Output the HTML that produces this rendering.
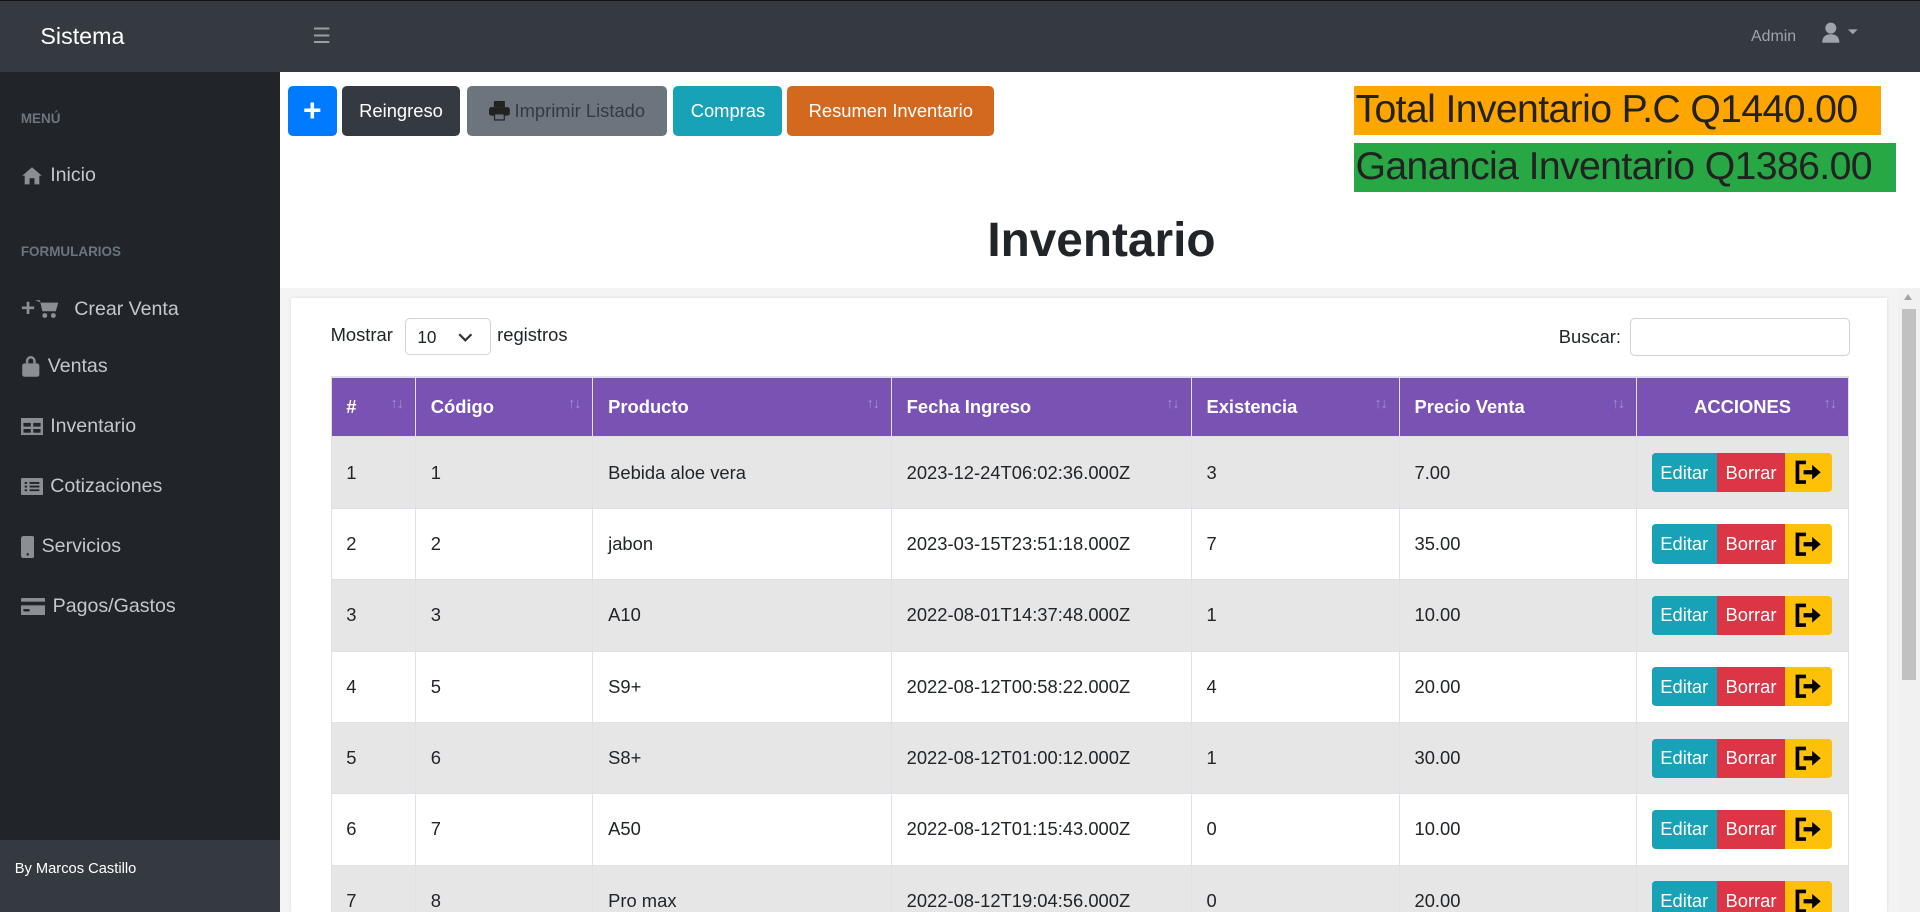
<!DOCTYPE html>
<html><head><meta charset="utf-8">
<style>
html{zoom:1.2245;overflow:hidden;height:745px}
*{box-sizing:border-box;margin:0;padding:0}
body{width:1568px;height:745px;overflow:hidden;font-family:"Liberation Sans",sans-serif;font-size:15px;color:#212529;background:#fff}
#wrap{position:relative;width:1568px;height:745px;overflow:hidden}
.abs{position:absolute}
.top{left:0;top:0;width:1568px;height:59px;background:#343a40;border-top:1px solid #111}
.side{left:0;top:59px;width:229px;height:686px;background:#212529}
.brand{left:33px;top:19px;color:#fff;font-size:19px}
.burg{left:255px;top:20px;color:#9a9da1;font-size:17px}
.admin{left:1430px;top:23px;color:#9ea4aa;font-size:13px}
.mh{color:#6c757d;font-size:11px;font-weight:bold;left:17px}
.mi{color:#c2c7d0;font-size:16px;left:17px;display:flex;align-items:center;gap:6px}
.foot{left:0;top:686px;width:229px;height:59px;background:#343a40;color:#fff;font-size:12px;padding:17px 12px}
.btn{top:70px;height:41px;border-radius:4px;color:#fff;font-size:15px;display:flex;align-items:center;justify-content:center}
.tot{font-size:32px;color:#222;line-height:40px;padding-left:1px;white-space:nowrap;overflow:hidden}
.title{left:239px;width:1321px;top:174px;text-align:center;font-size:39px;font-weight:bold;color:#212529}
.band{left:229px;top:235px;width:1321px;height:510px;background:#f4f4f4}
.card{left:238px;top:243px;width:1303px;height:502px;background:#fff;box-shadow:0 0 3px rgba(0,0,0,.1)}
.sb{left:1550px;top:235px;width:18px;height:510px;background:#f1f1f1}
table{position:absolute;left:270px;top:307px;width:1240px;border-collapse:collapse;font-size:15px;border-top:2px solid #dee2e6}
th{background:#7952b3;color:#fff;font-weight:bold;text-align:left;height:49px;padding:0 12px;border:1px solid #dee2e6;border-top:0;position:relative}
th .s{position:absolute;right:10px;top:15px;color:#a48fcf;font-size:12px;font-weight:normal;letter-spacing:-1px}
td{height:58.3px;padding:0 12px;border:1px solid #dee2e6;border-top:0}
tr.g td{background:#e6e6e6}
.acts{display:flex}
.acts span{height:32px;display:flex;align-items:center;justify-content:center;color:#fff;font-size:15px}
</style></head><body><div id="wrap">
<div class="abs top"></div>
<div class="abs brand">Sistema</div>
<div class="abs burg">&#9776;</div>
<div class="abs admin">Admin</div>
<svg class="abs" style="left:1487px;top:18px" width="34" height="18" viewBox="0 0 34 18"><circle cx="8" cy="5" r="4.5" fill="#9ea4aa"/><path d="M1 17 Q1 10 8 10 Q15 10 15 17Z" fill="#9ea4aa"/><path d="M22 6 L30 6 L26 10Z" fill="#9ea4aa"/></svg>
<div class="abs side"></div>
<div class="abs mh" style="top:91px">MENÚ</div>
<div class="abs mi" style="top:134px"><svg width="18" height="16" viewBox="0 0 18 16"><path d="M9 1 L17 8 L15 8 L15 15 L11 15 L11 10 L7 10 L7 15 L3 15 L3 8 L1 8Z" fill="#8a8f95"/></svg>Inicio</div>
<div class="abs mh" style="top:199px">FORMULARIOS</div>
<div class="abs mi" style="top:241px"><span style="color:#8a8f95;font-weight:bold;font-size:20px;margin-right:-6px">+</span><svg width="20" height="16" viewBox="0 0 20 16"><path d="M0 1 H4 L6 10 H17 L19 3 H5" fill="#8a8f95"/><circle cx="8" cy="13.5" r="2" fill="#8a8f95"/><circle cx="15" cy="13.5" r="2" fill="#8a8f95"/></svg><span style="margin-left:6px">Crear Venta</span></div>
<div class="abs mi" style="top:290px"><svg width="16" height="17" viewBox="0 0 16 17"><path d="M5 6 V4 a3 3 0 0 1 6 0 V6" stroke="#8a8f95" stroke-width="2" fill="none"/><rect x="1" y="6" width="14" height="11" rx="2" fill="#8a8f95"/></svg>Ventas</div>
<div class="abs mi" style="top:339px"><svg width="18" height="14" viewBox="0 0 18 14"><rect x="0" y="0" width="18" height="14" fill="#8a8f95"/><rect x="2" y="4" width="6" height="3" fill="#212529"/><rect x="10" y="4" width="6" height="3" fill="#212529"/><rect x="2" y="9" width="6" height="3" fill="#212529"/><rect x="10" y="9" width="6" height="3" fill="#212529"/></svg>Inventario</div>
<div class="abs mi" style="top:388px"><svg width="18" height="14" viewBox="0 0 18 14"><rect width="18" height="14" rx="1" fill="#8a8f95"/><path d="M3 4h2M7 4h8M3 7h2M7 7h8M3 10h2M7 10h8" stroke="#212529" stroke-width="1.5"/></svg>Cotizaciones</div>
<div class="abs mi" style="top:437px"><svg width="11" height="18" viewBox="0 0 11 18"><rect width="11" height="18" rx="2" fill="#8a8f95"/><circle cx="5.5" cy="15" r="1" fill="#212529"/></svg>Servicios</div>
<div class="abs mi" style="top:486px"><svg width="20" height="14" viewBox="0 0 20 14"><rect width="20" height="14" rx="1" fill="#8a8f95"/><rect y="3" width="20" height="3" fill="#212529"/><rect x="2" y="9" width="5" height="2" fill="#212529"/></svg>Pagos/Gastos</div>
<div class="abs foot">By Marcos Castillo</div>

<div class="abs btn" style="left:235px;width:40px;background:#007bff;font-size:26px;font-weight:bold">+</div>
<div class="abs btn" style="left:279px;width:97px;background:#343a40">Reingreso</div>
<div class="abs btn" style="left:381px;width:164px;background:#6c757d;color:#343a40"><svg width="17" height="16" viewBox="0 0 17 16" style="margin-right:4px"><rect x="4" y="0" width="9" height="5" fill="#222"/><rect x="0" y="5" width="17" height="7" rx="2" fill="#222"/><rect x="4" y="10" width="9" height="6" fill="#222"/><rect x="5" y="11" width="7" height="4" fill="#6c757d"/></svg>Imprimir Listado</div>
<div class="abs btn" style="left:550px;width:89px;background:#17a2b8">Compras</div>
<div class="abs btn" style="left:643px;width:169px;background:#d2691e">Resumen Inventario</div>

<div class="abs tot" style="left:1106px;top:70px;width:430px;background:#ffa500;letter-spacing:-0.5px">Total Inventario P.C Q1440.00</div>
<div class="abs tot" style="left:1106px;top:117px;width:442px;background:#28a745;letter-spacing:-0.5px">Ganancia Inventario Q1386.00</div>
<div class="abs title">Inventario</div>

<div class="abs band"></div>
<div class="abs card"></div>
<div class="abs sb"><div style="position:absolute;left:3px;top:17px;width:12px;height:303px;background:#c1c1c1"></div><div style="position:absolute;left:5px;top:5px;border:4px solid transparent;border-bottom:5px solid #a3a3a3;border-top:0"></div></div>

<div class="abs" style="left:270px;top:265px">Mostrar</div>
<div class="abs" style="left:331px;top:260px;width:70px;height:30px;border:1px solid #ced4da;border-radius:4px;padding:6px 9px;font-size:14px">10<svg style="position:absolute;right:14px;top:11px" width="12" height="8" viewBox="0 0 12 8"><path d="M1 1 L6 6 L11 1" stroke="#333" stroke-width="1.8" fill="none"/></svg></div>
<div class="abs" style="left:406px;top:265px">registros</div>
<div class="abs" style="left:1273px;top:266px">Buscar:</div>
<div class="abs" style="left:1331px;top:260px;width:180px;height:31px;border:1px solid #ced4da;border-radius:4px"></div>

<table>
<colgroup><col style="width:69px"><col style="width:145px"><col style="width:244px"><col style="width:245px"><col style="width:170px"><col style="width:194px"><col style="width:173px"></colgroup>
<tr><th>#<span class="s">↑↓</span></th><th>Código<span class="s">↑↓</span></th><th>Producto<span class="s">↑↓</span></th><th>Fecha Ingreso<span class="s">↑↓</span></th><th>Existencia<span class="s">↑↓</span></th><th>Precio Venta<span class="s">↑↓</span></th><th style="text-align:center">ACCIONES<span class="s">↑↓</span></th></tr>
<tr class="g"><td>1</td><td>1</td><td>Bebida aloe vera</td><td>2023-12-24T06:02:36.000Z</td><td>3</td><td>7.00</td><td><div class="acts"><span style="width:53px;background:#17a2b8;border-radius:3px 0 0 3px">Editar</span><span style="width:56px;background:#dc3545">Borrar</span><span style="width:38px;background:#ffc107;border-radius:0 3px 3px 0"><svg width="22" height="20" viewBox="0 0 22 20"><path d="M9 2H2V18H9" stroke="#000" stroke-width="3" fill="none"/><path d="M7 10H16" stroke="#000" stroke-width="3.5"/><path d="M14 4L21 10L14 16Z" fill="#000"/></svg></span></div></td></tr>
<tr><td>2</td><td>2</td><td>jabon</td><td>2023-03-15T23:51:18.000Z</td><td>7</td><td>35.00</td><td><div class="acts"><span style="width:53px;background:#17a2b8;border-radius:3px 0 0 3px">Editar</span><span style="width:56px;background:#dc3545">Borrar</span><span style="width:38px;background:#ffc107;border-radius:0 3px 3px 0"><svg width="22" height="20" viewBox="0 0 22 20"><path d="M9 2H2V18H9" stroke="#000" stroke-width="3" fill="none"/><path d="M7 10H16" stroke="#000" stroke-width="3.5"/><path d="M14 4L21 10L14 16Z" fill="#000"/></svg></span></div></td></tr>
<tr class="g"><td>3</td><td>3</td><td>A10</td><td>2022-08-01T14:37:48.000Z</td><td>1</td><td>10.00</td><td><div class="acts"><span style="width:53px;background:#17a2b8;border-radius:3px 0 0 3px">Editar</span><span style="width:56px;background:#dc3545">Borrar</span><span style="width:38px;background:#ffc107;border-radius:0 3px 3px 0"><svg width="22" height="20" viewBox="0 0 22 20"><path d="M9 2H2V18H9" stroke="#000" stroke-width="3" fill="none"/><path d="M7 10H16" stroke="#000" stroke-width="3.5"/><path d="M14 4L21 10L14 16Z" fill="#000"/></svg></span></div></td></tr>
<tr><td>4</td><td>5</td><td>S9+</td><td>2022-08-12T00:58:22.000Z</td><td>4</td><td>20.00</td><td><div class="acts"><span style="width:53px;background:#17a2b8;border-radius:3px 0 0 3px">Editar</span><span style="width:56px;background:#dc3545">Borrar</span><span style="width:38px;background:#ffc107;border-radius:0 3px 3px 0"><svg width="22" height="20" viewBox="0 0 22 20"><path d="M9 2H2V18H9" stroke="#000" stroke-width="3" fill="none"/><path d="M7 10H16" stroke="#000" stroke-width="3.5"/><path d="M14 4L21 10L14 16Z" fill="#000"/></svg></span></div></td></tr>
<tr class="g"><td>5</td><td>6</td><td>S8+</td><td>2022-08-12T01:00:12.000Z</td><td>1</td><td>30.00</td><td><div class="acts"><span style="width:53px;background:#17a2b8;border-radius:3px 0 0 3px">Editar</span><span style="width:56px;background:#dc3545">Borrar</span><span style="width:38px;background:#ffc107;border-radius:0 3px 3px 0"><svg width="22" height="20" viewBox="0 0 22 20"><path d="M9 2H2V18H9" stroke="#000" stroke-width="3" fill="none"/><path d="M7 10H16" stroke="#000" stroke-width="3.5"/><path d="M14 4L21 10L14 16Z" fill="#000"/></svg></span></div></td></tr>
<tr><td>6</td><td>7</td><td>A50</td><td>2022-08-12T01:15:43.000Z</td><td>0</td><td>10.00</td><td><div class="acts"><span style="width:53px;background:#17a2b8;border-radius:3px 0 0 3px">Editar</span><span style="width:56px;background:#dc3545">Borrar</span><span style="width:38px;background:#ffc107;border-radius:0 3px 3px 0"><svg width="22" height="20" viewBox="0 0 22 20"><path d="M9 2H2V18H9" stroke="#000" stroke-width="3" fill="none"/><path d="M7 10H16" stroke="#000" stroke-width="3.5"/><path d="M14 4L21 10L14 16Z" fill="#000"/></svg></span></div></td></tr>
<tr class="g"><td>7</td><td>8</td><td>Pro max</td><td>2022-08-12T19:04:56.000Z</td><td>0</td><td>20.00</td><td><div class="acts"><span style="width:53px;background:#17a2b8;border-radius:3px 0 0 3px">Editar</span><span style="width:56px;background:#dc3545">Borrar</span><span style="width:38px;background:#ffc107;border-radius:0 3px 3px 0"><svg width="22" height="20" viewBox="0 0 22 20"><path d="M9 2H2V18H9" stroke="#000" stroke-width="3" fill="none"/><path d="M7 10H16" stroke="#000" stroke-width="3.5"/><path d="M14 4L21 10L14 16Z" fill="#000"/></svg></span></div></td></tr>
</table>
</div></body></html>
